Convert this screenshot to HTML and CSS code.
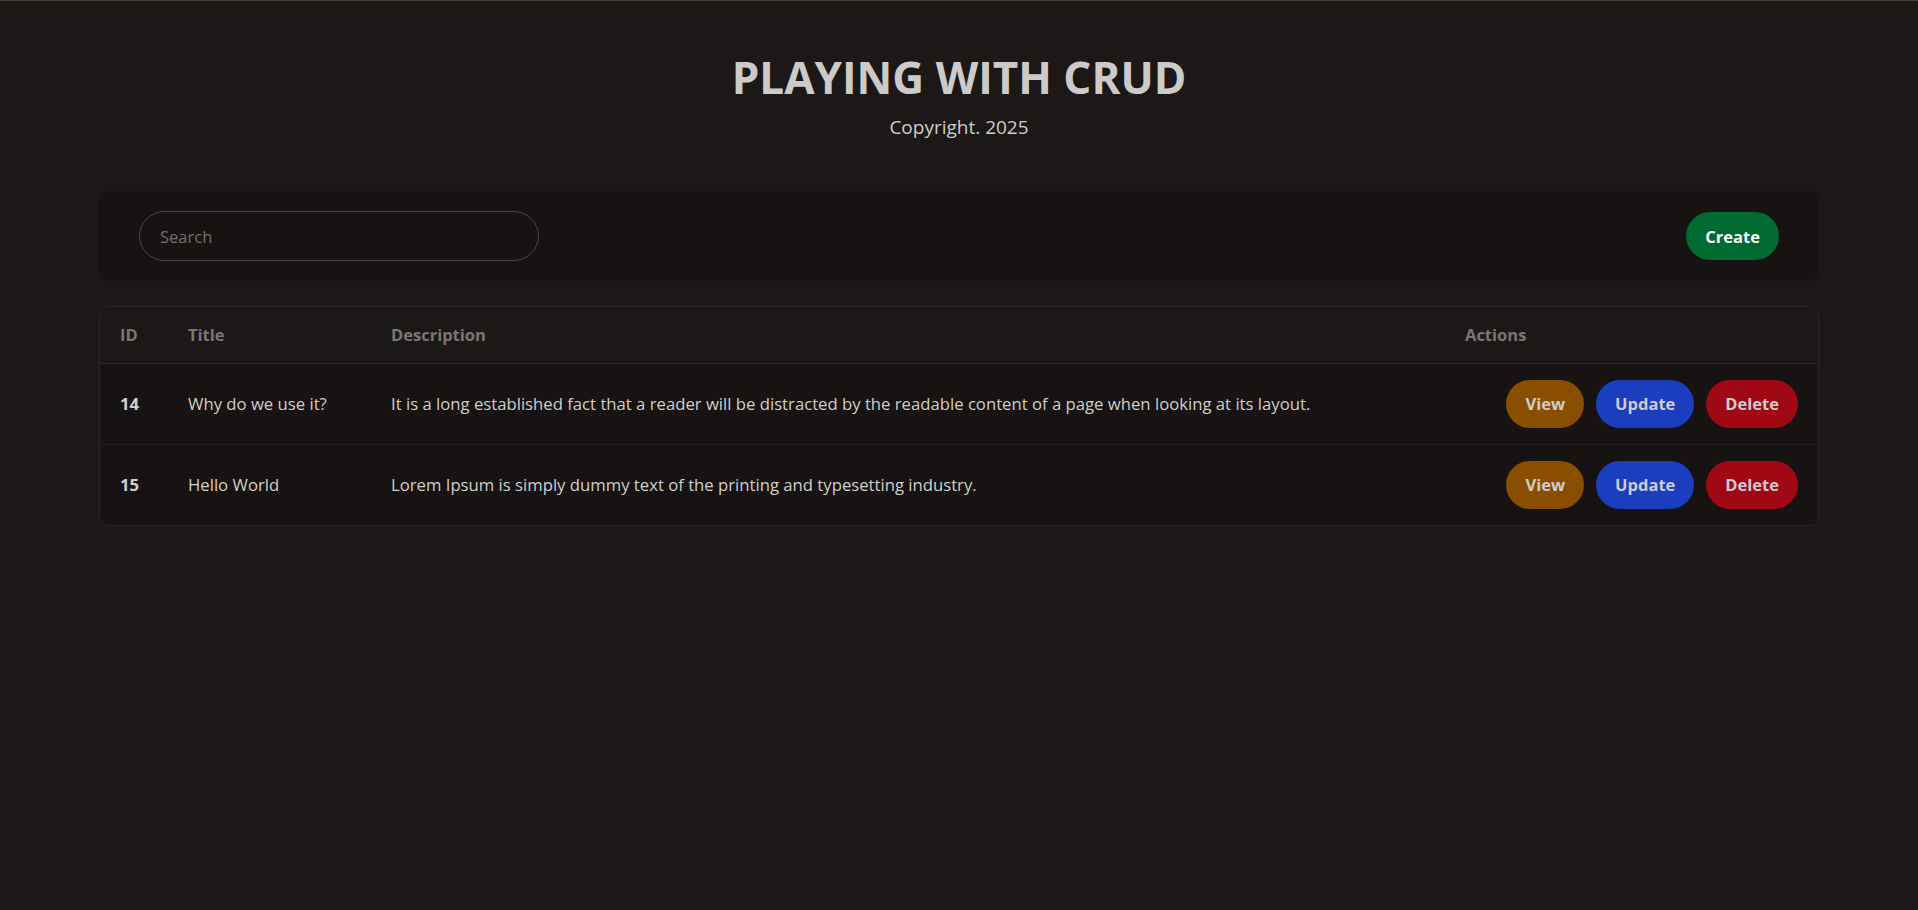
FILE: index.html
```html
<!DOCTYPE html>
<html lang="en">
<head>
<meta charset="utf-8">
<title>Playing with CRUD</title>
<link rel="stylesheet" href="styles.css">
</head>
<body>
<header class="page-header">
  <h1 class="page-title">PLAYING WITH CRUD</h1>
  <p class="page-copy">Copyright. 2025</p>
</header>
<main class="container">
  <section class="toolbar">
    <input class="search" type="text" placeholder="Search">
    <button class="btn btn-create">Create</button>
  </section>
  <section class="table-card">
    <table class="data-table">
      <colgroup>
        <col class="col-id">
        <col class="col-title">
        <col class="col-desc">
        <col class="col-actions">
      </colgroup>
      <thead>
        <tr>
          <th>ID</th>
          <th>Title</th>
          <th>Description</th>
          <th>Actions</th>
        </tr>
      </thead>
      <tbody>
        <tr>
          <td class="cell-id">14</td>
          <td>Why do we use it?</td>
          <td>It is a long established fact that a reader will be distracted by the readable content of a page when looking at its layout.</td>
          <td>
            <div class="actions">
              <button class="btn btn-view">View</button>
              <button class="btn btn-update">Update</button>
              <button class="btn btn-delete">Delete</button>
            </div>
          </td>
        </tr>
        <tr>
          <td class="cell-id">15</td>
          <td>Hello World</td>
          <td>Lorem Ipsum is simply dummy text of the printing and typesetting industry.</td>
          <td>
            <div class="actions">
              <button class="btn btn-view">View</button>
              <button class="btn btn-update">Update</button>
              <button class="btn btn-delete">Delete</button>
            </div>
          </td>
        </tr>
      </tbody>
    </table>
  </section>
</main>
</body>
</html>
```
FILE: styles.css
```css
* { box-sizing: border-box; }

html, body { height: 100%; }

body {
  margin: 0;
  background: #1c1817;
  border-top: 1px solid #4a4236;
  color: #d2cecb;
  font-family: "Open Sans", "Noto Sans", sans-serif;
}

.page-header {
  text-align: center;
  padding-top: 50px;
}

.page-title {
  margin: 0;
  font-size: 44px;
  line-height: 53px;
  font-weight: 700;
  color: #cccbca;
}

.page-copy {
  margin: 10px 0 0;
  font-size: 19px;
  line-height: 26px;
  color: #cfcccb;
}

.container {
  width: 1720px;
  margin: 51px auto 0;
  display: flex;
  flex-direction: column;
  gap: 25px;
}

.toolbar {
  height: 90px;
  background: #161312;
  border-radius: 10px;
  padding: 0 40px;
  display: flex;
  align-items: center;
  justify-content: space-between;
}

.search {
  width: 400px;
  height: 50px;
  border: 1px solid #4a4543;
  border-radius: 25px;
  background: transparent;
  padding: 0 20px;
  font-family: inherit;
  font-size: 16.5px;
  color: #d2cecb;
  outline: none;
}

.search::placeholder { color: #74706d; }

.btn {
  height: 48px;
  border: none;
  border-radius: 24px;
  padding: 0 19px;
  font-family: inherit;
  font-size: 16.5px;
  font-weight: 700;
  color: #cfcbd0;
  cursor: pointer;
}

.btn-create { background: #006a30; color: #ffffff; }
.btn-view { background: #8a4e00; }
.btn-update { background: #1a3ebe; }
.btn-delete { background: #a00814; }

.table-card {
  border: 1px solid #2a2625;
  border-radius: 10px;
  overflow: hidden;
}

.data-table {
  width: 100%;
  border-collapse: collapse;
  table-layout: fixed;
}

.col-id { width: 68px; }
.col-title { width: 203px; }
.col-actions { width: 373px; }

.data-table th {
  height: 56px;
  padding: 0 20px;
  text-align: left;
  font-size: 16.5px;
  font-weight: 700;
  color: #7b7674;
  background: #1c1817;
  border-bottom: 1px solid #2a2625;
}

.data-table td {
  height: 81px;
  padding: 0 20px;
  font-size: 16.7px;
  color: #d2cecb;
  background: #161312;
  white-space: nowrap;
}

.data-table tbody tr + tr td { border-top: 1px solid #231f1e; }

.cell-id { font-weight: 700; }

.actions {
  display: flex;
  justify-content: flex-end;
  gap: 12px;
}
```
